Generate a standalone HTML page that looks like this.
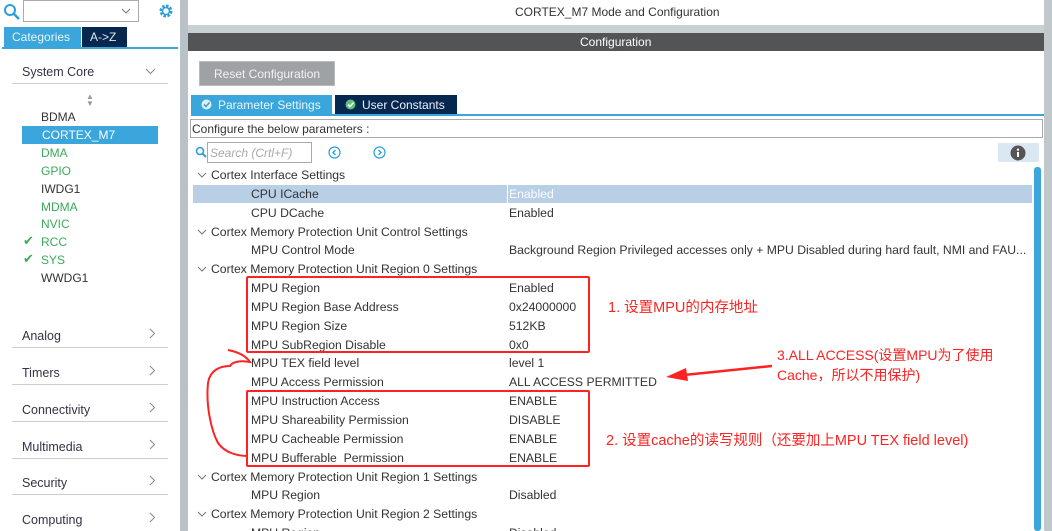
<!DOCTYPE html>
<html><head><meta charset="utf-8"><style>
*{margin:0;padding:0;box-sizing:border-box}
html,body{width:1052px;height:531px;overflow:hidden}
body{background:#fff;font-family:"Liberation Sans","Noto Sans CJK SC",sans-serif;font-size:12px;color:#333;position:relative}
.a{position:absolute;white-space:nowrap}
.cat{position:absolute;left:12px;width:156px;border-bottom:1px solid #ccd;height:28px;font-size:12.5px;color:#334}
.cat span{position:absolute;left:10px;bottom:4px}
.cat svg{position:absolute;right:12px;bottom:8px}
.li{position:absolute;left:41px;font-size:12px}
.g{color:#3caa5a}
.row{position:absolute;left:193px;width:839px;height:19px;font-size:12.2px;color:#333}
.row .k{position:absolute;left:58px;top:2px}
.row .v{position:absolute;left:316px;top:2px}
.row .h{position:absolute;left:18px;top:2px}
.row .c{position:absolute;left:4px;top:6px}
.red{position:absolute;border:2px solid #f22;border-radius:2px}
.ann{position:absolute;color:#f22;font-size:14.5px;white-space:nowrap}
</style></head><body>
<div class="a" style="left:0;top:0;width:180px;height:531px;background:#fff"></div>
<div class="a" style="left:180px;top:0;width:8px;height:531px;background:#b8c2c8"></div>
<svg class="a" style="left:3px;top:3px" width="18" height="18"><circle cx="7" cy="7" r="5" fill="none" stroke="#2a9fd8" stroke-width="2"/><line x1="11" y1="11" x2="16" y2="16" stroke="#2a9fd8" stroke-width="2.5"/></svg>
<div class="a" style="left:23px;top:0;width:116px;height:22px;border:1px solid #aaa"></div>
<svg class="a" style="left:121px;top:8px" width="10" height="6"><path d="M1 1l4 4 4-4" stroke="#777" fill="none"/></svg>
<svg class="a" style="left:157px;top:2px" width="18" height="18"><circle cx="9" cy="9" r="5" fill="none" stroke="#2a9fd8" stroke-width="3" stroke-dasharray="2.5 1.4"/><circle cx="9" cy="9" r="3.5" fill="none" stroke="#2a9fd8" stroke-width="1.5"/></svg>
<div class="a" style="left:4px;top:27px;width:77px;height:20px;background:#3aa6dc;color:#e8f4fb;font-size:12px;padding:3px 0 0 8px">Categories</div>
<div class="a" style="left:82px;top:27px;width:45px;height:20px;background:#06284e;color:#e0e8f0;font-size:12px;padding:3px 0 0 8px">A-&gt;Z</div>
<div class="a" style="left:2px;top:47px;width:176px;height:2px;background:#3aa6dc"></div>
<div class="cat" style="top:56px"><span>System Core</span><svg width="11" height="7"><path d="M1 1l4.5 4.5L10 1" stroke="#888" fill="none"/></svg></div>
<div class="a" style="left:86px;top:93px;font-size:8px;color:#999;line-height:7px">▲<br>▼</div>
<div class="li" style="top:110px">BDMA</div>
<div class="a" style="left:22px;top:126px;width:136px;height:18px;background:#3aa6dc"></div>
<div class="li" style="top:128px;color:#fff;left:42px">CORTEX_M7</div>
<div class="li g" style="top:146px">DMA</div>
<div class="li g" style="top:164px">GPIO</div>
<div class="li" style="top:182px">IWDG1</div>
<div class="li g" style="top:200px">MDMA</div>
<div class="li g" style="top:217px">NVIC</div>
<div class="li g" style="top:235px">RCC</div>
<div class="li g" style="top:253px">SYS</div>
<div class="a g" style="left:23px;top:233px;font-size:13px">✔</div>
<div class="a g" style="left:23px;top:251px;font-size:13px">✔</div>
<div class="li" style="top:271px">WWDG1</div>
<div class="cat" style="top:320px"><span>Analog</span><svg width="7" height="11"><path d="M1 1l4.5 4.5L1 10" stroke="#888" fill="none"/></svg></div>
<div class="cat" style="top:357px"><span>Timers</span><svg width="7" height="11"><path d="M1 1l4.5 4.5L1 10" stroke="#888" fill="none"/></svg></div>
<div class="cat" style="top:394px"><span>Connectivity</span><svg width="7" height="11"><path d="M1 1l4.5 4.5L1 10" stroke="#888" fill="none"/></svg></div>
<div class="cat" style="top:431px"><span>Multimedia</span><svg width="7" height="11"><path d="M1 1l4.5 4.5L1 10" stroke="#888" fill="none"/></svg></div>
<div class="cat" style="top:467px"><span>Security</span><svg width="7" height="11"><path d="M1 1l4.5 4.5L1 10" stroke="#888" fill="none"/></svg></div>
<div class="cat" style="top:504px"><span>Computing</span><svg width="7" height="11"><path d="M1 1l4.5 4.5L1 10" stroke="#888" fill="none"/></svg></div>
<div class="a" style="left:188px;top:0;width:864px;height:25px;background:#fff"></div>
<div class="a" style="left:515px;top:5px;font-size:12px;color:#333">CORTEX_M7 Mode and Configuration</div>
<div class="a" style="left:188px;top:25px;width:864px;height:8px;background:#c8d0d4"></div>
<div class="a" style="left:188px;top:33px;width:864px;height:18px;background:#525456"></div>
<div class="a" style="left:580px;top:35px;color:#fff;font-size:12px">Configuration</div>
<div class="a" style="left:199px;top:61px;width:136px;height:25px;background:#9ea2a4;border:1px solid #b8bcbe;color:#f2f2f2;padding:5px 0 0 14px">Reset Configuration</div>
<div class="a" style="left:191px;top:95px;width:141px;height:20px;background:#3aa6dc;color:#eaf6fc;padding:3px 0 0 27px">Parameter Settings</div>
<div class="a" style="left:335px;top:95px;width:122px;height:20px;background:#06284e;color:#eef;padding:3px 0 0 27px">User Constants</div>
<svg class="a" style="left:201px;top:99px" width="11" height="11"><circle cx="5.5" cy="5.5" r="5" fill="#e0f0e8"/><path d="M3 5.5l2 2 3.5-4" stroke="#3aa6dc" stroke-width="1.6" fill="none"/></svg>
<svg class="a" style="left:345px;top:99px" width="11" height="11"><circle cx="5.5" cy="5.5" r="5" fill="#5cc07a"/><path d="M3 5.5l2 2 3.5-4" stroke="#fff" stroke-width="1.6" fill="none"/></svg>
<div class="a" style="left:191px;top:114px;width:854px;height:2px;background:#3aa6dc"></div>
<div class="a" style="left:190px;top:119px;width:853px;height:19px;border:1px solid #aaa;padding:2px 0 0 1px">Configure the below parameters :</div>
<svg class="a" style="left:195px;top:146px" width="12" height="12"><circle cx="5" cy="5" r="3.5" fill="none" stroke="#2a9fd8" stroke-width="1.6"/><line x1="7.5" y1="7.5" x2="11" y2="11" stroke="#2a9fd8" stroke-width="2"/></svg>
<div class="a" style="left:207px;top:142px;width:105px;height:21px;border:1px solid #aaa;color:#aaa;font-style:italic;padding:3px 0 0 2px">Search (Crtl+F)</div>
<svg class="a" style="left:328px;top:146px" width="13" height="13"><circle cx="6.5" cy="6.5" r="5.5" fill="none" stroke="#2a9fd8" stroke-width="1.2"/><path d="M7.5 4L5 6.5 7.5 9" stroke="#2a9fd8" stroke-width="1.4" fill="none"/></svg>
<svg class="a" style="left:373px;top:146px" width="13" height="13"><circle cx="6.5" cy="6.5" r="5.5" fill="none" stroke="#2a9fd8" stroke-width="1.2"/><path d="M5.5 4L8 6.5 5.5 9" stroke="#2a9fd8" stroke-width="1.4" fill="none"/></svg>
<div class="a" style="left:998px;top:143px;width:41px;height:19px;background:#dbe8f4"></div>
<svg class="a" style="left:1010px;top:145px" width="16" height="16"><circle cx="8" cy="8" r="7.5" fill="#555"/><rect x="7" y="7" width="2" height="5" fill="#fff"/><circle cx="8" cy="4.7" r="1.2" fill="#fff"/></svg>
<div class="a" style="left:1034px;top:167px;width:7px;height:364px;background:#3aa6dc;border-radius:3px"></div>
<div class="a" style="left:1044px;top:0;width:8px;height:531px;background:#c0c8cc"></div>
<div class="a" style="left:193px;top:185px;width:839px;height:18px;background:#b8cfe6"></div>
<div class="a" style="left:507px;top:185px;width:1px;height:18px;background:#fff"></div>

<div class="row" style="top:166px"><svg class="c" width="10" height="6"><path d="M1 1l4 4 4-4" stroke="#777" fill="none"/></svg><span class="h">Cortex Interface Settings</span></div>
<div class="row" style="top:185px"><span class="k">CPU ICache</span><span class="v" style="color:#fafcff">Enabled</span></div>
<div class="row" style="top:204px"><span class="k">CPU DCache</span><span class="v">Enabled</span></div>
<div class="row" style="top:223px"><svg class="c" width="10" height="6"><path d="M1 1l4 4 4-4" stroke="#777" fill="none"/></svg><span class="h">Cortex Memory Protection Unit Control Settings</span></div>
<div class="row" style="top:241px"><span class="k">MPU Control Mode</span><span class="v">Background Region Privileged accesses only + MPU Disabled during hard fault, NMI and FAU...</span></div>
<div class="row" style="top:260px"><svg class="c" width="10" height="6"><path d="M1 1l4 4 4-4" stroke="#777" fill="none"/></svg><span class="h">Cortex Memory Protection Unit Region 0 Settings</span></div>
<div class="row" style="top:279px"><span class="k">MPU Region</span><span class="v">Enabled</span></div>
<div class="row" style="top:298px"><span class="k">MPU Region Base Address</span><span class="v">0x24000000</span></div>
<div class="row" style="top:317px"><span class="k">MPU Region Size</span><span class="v">512KB</span></div>
<div class="row" style="top:336px"><span class="k">MPU SubRegion Disable</span><span class="v">0x0</span></div>
<div class="row" style="top:354px"><span class="k">MPU TEX field level</span><span class="v">level 1</span></div>
<div class="row" style="top:373px"><span class="k">MPU Access Permission</span><span class="v">ALL ACCESS PERMITTED</span></div>
<div class="row" style="top:392px"><span class="k">MPU Instruction Access</span><span class="v">ENABLE</span></div>
<div class="row" style="top:411px"><span class="k">MPU Shareability Permission</span><span class="v">DISABLE</span></div>
<div class="row" style="top:430px"><span class="k">MPU Cacheable Permission</span><span class="v">ENABLE</span></div>
<div class="row" style="top:449px"><span class="k">MPU Bufferable&nbsp; Permission</span><span class="v">ENABLE</span></div>
<div class="row" style="top:468px"><svg class="c" width="10" height="6"><path d="M1 1l4 4 4-4" stroke="#777" fill="none"/></svg><span class="h">Cortex Memory Protection Unit Region 1 Settings</span></div>
<div class="row" style="top:486px"><span class="k">MPU Region</span><span class="v">Disabled</span></div>
<div class="row" style="top:505px"><svg class="c" width="10" height="6"><path d="M1 1l4 4 4-4" stroke="#777" fill="none"/></svg><span class="h">Cortex Memory Protection Unit Region 2 Settings</span></div>
<div class="row" style="top:524px"><span class="k">MPU Region</span><span class="v">Disabled</span></div>

<div class="red" style="left:246px;top:276px;width:344px;height:77px"></div>
<div class="red" style="left:246px;top:390px;width:344px;height:77px"></div>
<svg class="a" style="left:200px;top:348px" width="60" height="125"><path d="M28 2 C38 4 46 8 50 14 C40 12 32 14 30 18 C20 18 10 22 8 35 C6 55 10 80 18 95 C25 105 38 108 48 108" stroke="#f22" stroke-width="2" fill="none"/></svg>
<svg class="a" style="left:664px;top:360px" width="110" height="24"><path d="M108 6 L20 15" stroke="#f22" stroke-width="2.5"/><path d="M2 17 L22 8 L24 21 Z" fill="#f22"/></svg>
<div class="ann" style="left:608px;top:296px">1. 设置MPU的内存地址</div>
<div class="ann" style="left:777px;top:345px;line-height:20px;font-size:14px">3.ALL ACCESS(设置MPU为了使用<br>Cache，所以不用保护)</div>
<div class="ann" style="left:606px;top:429px">2. 设置cache的读写规则（还要加上MPU TEX field level)</div>
</body></html>
